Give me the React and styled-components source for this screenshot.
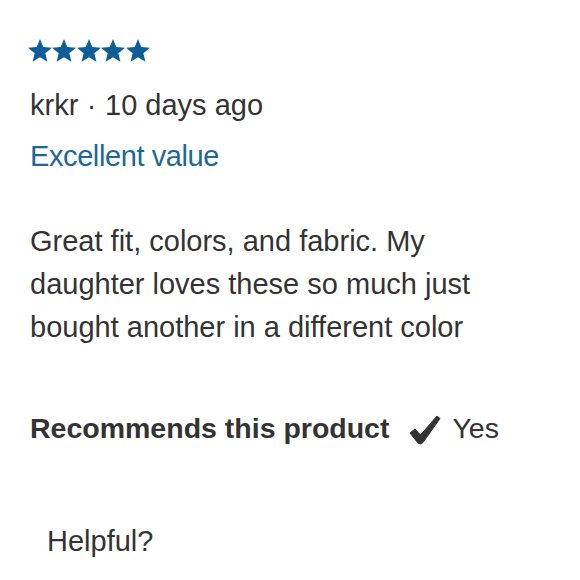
import React from 'react';
import styled, { createGlobalStyle } from 'styled-components';

const GlobalStyle = createGlobalStyle`
  body {
    margin: 0;
    background: #fff;
    font-family: "Liberation Sans", Arial, sans-serif;
    color: #333;
  }
`;

const Review = styled.div`
  padding: 39px 0 0 30px;
  width: 560px;
  box-sizing: border-box;
`;

const Stars = styled.div`
  display: flex;
  gap: 0.4px;
  height: 24px;
  margin-left: -2px;
`;

const Line = styled.div`
  font-size: 29px;
  line-height: 34px;
  color: ${(p) => p.color || '#333'};
  letter-spacing: ${(p) => p.tight ? '-0.4px' : 'normal'};
  margin-top: ${(p) => p.gap || 0}px;
`;

const Dot = styled.span`
  margin: 0 8.5px;
`;

const Body = styled.p`
  margin: 47px 0 0;
  font-size: 29px;
  line-height: 43px;
  color: #333;
`;

const Recommend = styled.div`
  display: flex;
  align-items: center;
  margin-top: 62px;
  font-size: 28.5px;
  line-height: 34px;
  color: #333;
`;

const Label = styled.span`
  font-weight: bold;
`;

const Check = styled.svg`
  margin: 3px 11px 0 20px;
`;

const Helpful = styled(Line)`
  margin-left: 17px;
`;

function Star() {
  return (
    <svg width="24" height="23" viewBox="0 0 24 23">
      <path
        d="M12 0L15.29 8.07L23.98 8.71L17.33 14.33L19.41 22.79L12 18.2L4.59 22.79L6.67 14.33L0.02 8.71L8.71 8.07Z"
        fill="#0d5e98"
      />
    </svg>
  );
}

export default function App() {
  return (
    <>
      <GlobalStyle />
      <Review>
        <Stars>
          {[0, 1, 2, 3, 4].map((i) => <Star key={i} />)}
        </Stars>
        <Line gap={25}>krkr<Dot>·</Dot>10 days ago</Line>
        <Line gap={17} color="#1d6898" tight>Excellent value</Line>
        <Body>
          Great fit, colors, and fabric. My<br />
          daughter loves these so much just<br />
          bought another in a different color
        </Body>
        <Recommend>
          <Label>Recommends this product</Label>
          <Check width="32" height="30" viewBox="0 0 32 30">
            <path
              d="M1 18 L6 14 L11.5 20 L28 1 L31 3.5 L14 27.5 Q11 30.5 8.5 27.5 Z"
              fill="#333"
              stroke="#333"
              strokeWidth="1"
              strokeLinejoin="round"
            />
          </Check>
          <span>Yes</span>
        </Recommend>
        <Helpful gap={79}>Helpful?</Helpful>
      </Review>
    </>
  );
}
